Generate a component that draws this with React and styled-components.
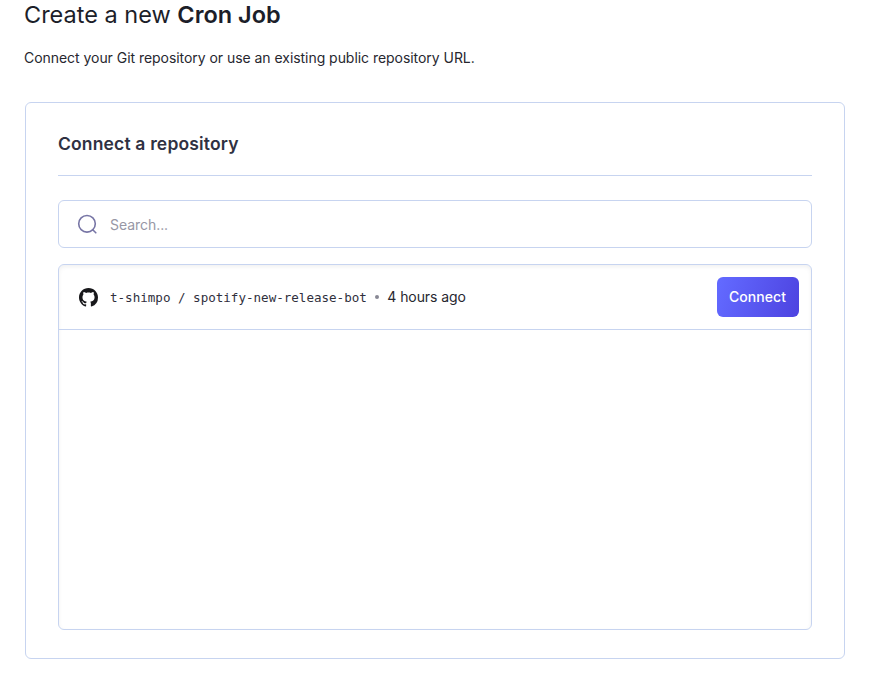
import React from "react";
import styled, { createGlobalStyle } from "styled-components";

const Global = createGlobalStyle`
  * { box-sizing: border-box; }
  body { margin: 0; background: #fff; color: #27272f; font-family: Inter, "Liberation Sans", sans-serif; overflow: hidden; }
`;
const Page = styled.main`
  height: 681px;
  padding: 0 24px 0 25px;
`;
const Title = styled.h1`
  margin: 0 0 0 -1px;
  height: 30px;
  line-height: 30px;
  font-size: 23.5px;
  font-weight: 400;
  color: #1c1e29;
  white-space: nowrap;
  strong { font-weight: 600; }
`;
const Intro = styled.p`
  margin: 18px 0 0 -1px;
  height: 20px;
  line-height: 20px;
  font-size: 14px;
  letter-spacing: -0.045px;
  white-space: nowrap;
`;
const Panel = styled.section`
  margin-top: 34px;
  height: 557px;
  padding: 29px 32px 0;
  border: 1px solid #c7d4f0;
  border-radius: 6px;
`;
const Heading = styled.h2`
  margin: 0;
  height: 44px;
  line-height: 24px;
  font-size: 17.5px;
  font-weight: 600;
  letter-spacing: 0.16px;
  color: #2f3142;
  border-bottom: 1px solid #c7d4f0;
  white-space: nowrap;
`;
const Search = styled.label`
  display: flex;
  align-items: center;
  gap: 12px;
  margin-top: 24px;
  height: 48px;
  padding: 0 18px;
  border: 1px solid #c7d4f0;
  border-radius: 6px;
`;
const SearchIcon = styled.svg`
  flex: none;
  width: 21px;
  height: 22px;
`;
const SearchInput = styled.input`
  flex: 1;
  border: 0;
  padding: 0;
  outline: 0;
  background: transparent;
  font: 400 14px Inter, sans-serif;
  &::placeholder { color: #9797a5; opacity: 1; letter-spacing: -0.05px; }
`;
const List = styled.div`
  margin-top: 16px;
  height: 366px;
  border: 1px solid #c7d4f0;
  border-radius: 6px;
  box-shadow: inset 0 2px 4px rgba(0, 0, 0, 0.06);
`;
const Row = styled.div`
  display: flex;
  align-items: center;
  height: 65px;
  padding: 0 12px 0 20px;
  border-bottom: 1px solid #c7d4f0;
`;
const Repo = styled.span`
  margin-left: 12px;
  font: 12.56px "DejaVu Sans Mono", monospace;
  color: #30303d;
  white-space: pre;
`;
const Dot = styled.span`
  width: 4px;
  height: 4px;
  margin: 0 8.5px 0 8px;
  border-radius: 50%;
  background: #888894;
`;
const Time = styled.span`
  height: 18px;
  margin-bottom: 1px;
  line-height: 18px;
  font-size: 14px;
  letter-spacing: -0.09px;
`;
const Connect = styled.button`
  margin-left: auto;
  width: 82px;
  height: 40px;
  padding: 0 1px 2px 0;
  border: 0;
  border-radius: 6px;
  color: white;
  font: 500 14px Inter, sans-serif;
  letter-spacing: 0.04px;
  background: linear-gradient(107deg, #6269ff 5%, #4d43e0);
`;

export default function App() {
  return (
    <>
      <Global />
      <Page>
        <Title>Create a new <strong>Cron Job</strong></Title>
        <Intro>Connect your Git repository or use an existing public repository URL.</Intro>
        <Panel>
          <Heading>Connect a repository</Heading>
          <Search>
            <SearchIcon viewBox="0 0 21 22" fill="none" stroke="#7775a5" strokeWidth="1.6" strokeLinecap="round">
              <circle cx="10" cy="10.8" r="8.3" />
              <path d="m16 17 2.8 2.8" />
            </SearchIcon>
            <SearchInput placeholder="Search..." />
          </Search>
          <List>
            <Row>
              <svg width="19" height="19" viewBox="0 0 16 16" fill="#18181b">
                <path d="M8 0C3.58 0 0 3.58 0 8c0 3.54 2.29 6.53 5.47 7.59.4.07.55-.17.55-.38 0-.19-.01-.82-.01-1.49-2.01.37-2.53-.49-2.69-.94-.09-.23-.48-.94-.82-1.13-.28-.15-.68-.52-.01-.53.63-.01 1.08.58 1.23.82.72 1.21 1.87.87 2.33.66.07-.52.28-.87.51-1.07-1.78-.2-3.64-.89-3.64-3.95 0-.87.31-1.59.82-2.15-.08-.2-.36-1.02.08-2.12 0 0 .67-.21 2.2.82.64-.18 1.32-.27 2-.27s1.36.09 2 .27c1.53-1.04 2.2-.82 2.2-.82.44 1.1.16 1.92.08 2.12.51.56.82 1.27.82 2.15 0 3.07-1.87 3.75-3.65 3.95.29.25.54.73.54 1.48 0 1.07-.01 1.93-.01 2.2 0 .21.15.46.55.38A8.01 8.01 0 0 0 16 8c0-4.42-3.58-8-8-8Z" />
              </svg>
              <Repo>t-shimpo / spotify-new-release-bot</Repo>
              <Dot />
              <Time>4 hours ago</Time>
              <Connect>Connect</Connect>
            </Row>
          </List>
        </Panel>
      </Page>
    </>
  );
}
